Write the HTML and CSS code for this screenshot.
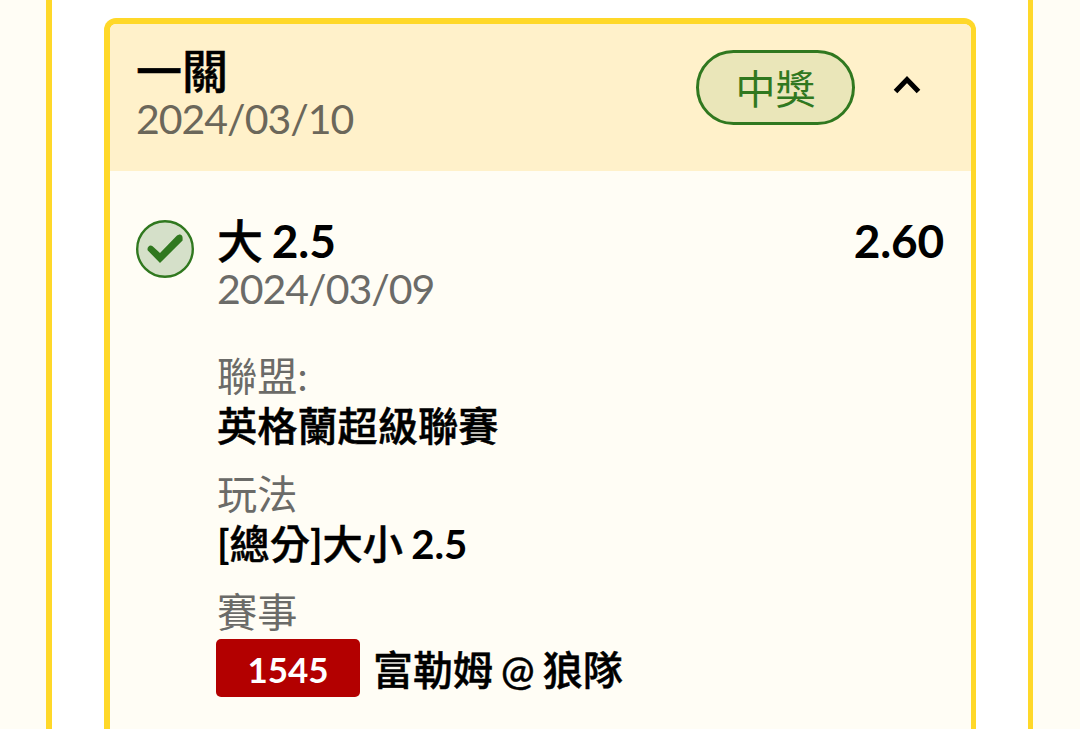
FILE: index.html
```html
<!DOCTYPE html>
<html lang="zh-Hant">
<head><meta charset="utf-8"><title>一關</title><link rel="stylesheet" href="styles.css"></head>
<body>
<main class="panel">
  <section class="card">
    <header class="head">
      <div class="head-text"><h1 class="title">一關</h1><div class="date">2024/03/10</div></div>
      <div class="badge">中獎</div>
      <svg class="chevron" viewBox="0 0 28 20"><path d="M2.5 16.5 14 4.5 25.5 16.5" fill="none" stroke="#000" stroke-width="5"/></svg>
    </header>
    <div class="body">
      <svg class="check" viewBox="0 0 58 58"><circle cx="29" cy="29" r="27.8" fill="#d5e0c9" stroke="#30781f" stroke-width="2.4"/><path d="M11.8 30.5C10.5 28 13.5 24 16.6 26.2L24 33 40.5 16C43.5 13.5 46.8 14 46.6 18.5V20.5L24 43Z" fill="#30781f"/></svg>
      <div class="bet">
        <div class="bet-head"><h2 class="title pick">大 <span class="latin">2.5</span></h2><span class="odds">2.60</span></div>
        <div class="date">2024/03/09</div>
        <dl class="details">
          <dt>聯盟:</dt><dd>英格蘭超級聯賽</dd>
          <dt>玩法</dt><dd class="play"><span class="latin">[</span>總分<span class="latin">]</span>大小 <span class="latin">2.5</span></dd>
          <dt>賽事</dt><dd class="match"><span class="code">1545</span><span class="teams">富勒姆 @ 狼隊</span></dd>
        </dl>
      </div>
    </div>
  </section>
</main>
</body>
</html>
```
FILE: styles.css
```css
* { box-sizing: border-box; margin: 0; padding: 0; }
body { width: 1080px; height: 729px; overflow: hidden; background: #fffdf5; font-family: Lato, "Noto Sans CJK TC", sans-serif; color: #000; }
.panel { height: 729px; margin: 0 47px 0 46px; padding: 18px 52px 0; background: #fff; border: solid #ffd829; border-width: 0 5px 0 6px; }
.card { height: 711px; border: solid #ffd829; border-width: 6px 5px 0 6px; border-radius: 12px 12px 0 0; background: #fffdf5; overflow: hidden; }
.head { display: flex; height: 147px; padding: 26px 50px 0 26px; background: #fff1ca; }
.head-text { flex: 1; margin-top: -4px; }
.title { font-size: 46px; line-height: 50px; font-weight: 500; white-space: nowrap; -webkit-text-stroke: 0.5px #000; }
.pick { word-spacing: -3px; }
.latin { font-weight: 700; -webkit-text-stroke: 0; }
.date { margin-top: -1px; font-size: 41px; line-height: 48px; letter-spacing: -1px; color: #6b6b68; white-space: nowrap; }
.head .date { color: #6b675a; }
.badge { width: 159px; height: 75px; border: 3px solid #30781f; border-radius: 38px; background: #eae6b9; color: #30781f; font-size: 40px; line-height: 73px; text-align: center; }
.chevron { width: 28px; height: 20px; margin: 25px 0 0 38px; }
.body { display: flex; padding: 45px 27px 0 26px; }
.check { width: 58px; height: 58px; margin-top: 4px; flex: none; }
.bet { flex: 1; margin-left: 23px; }
.bet-head { display: flex; justify-content: space-between; }
.odds { font-size: 46px; line-height: 50px; font-weight: 700; letter-spacing: -0.2px; }
.details { margin-top: 38px; font-size: 40.2px; line-height: 50px; }
.details dt { color: #6b6b68; }
.details dd { font-weight: 500; margin-bottom: 18px; white-space: nowrap; -webkit-text-stroke: 0.5px #000; }
.play { word-spacing: -2px; }
.details .match { display: flex; align-items: center; gap: 13px; margin: 2px 0 0 -1px; }
.teams { padding-top: 3px; font-size: 40px; word-spacing: -2px; }
.code { width: 144px; height: 58px; border-radius: 5px; background: #b30000; color: #fff; font-size: 35px; font-weight: 700; line-height: 60px; text-align: center; -webkit-text-stroke: 0; }
```
